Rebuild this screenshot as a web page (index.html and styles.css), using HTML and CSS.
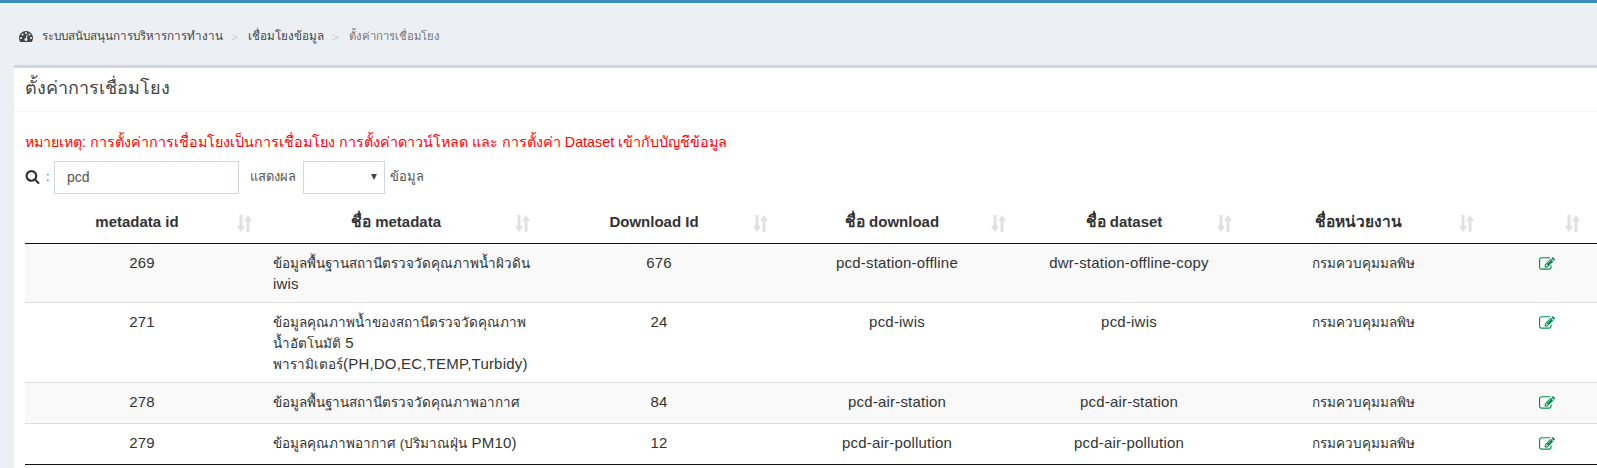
FILE: index.html
```html
<!DOCTYPE html>
<html>
<head>
  <title>ตั้งค่าการเชื่อมโยง</title>
  <link rel="stylesheet" href="styles.css">
</head>
<body>
  <svg class="defs" width="0" height="0">
    <symbol id="i-sort" viewBox="0 0 15 17">
      <path d="M2.500 0h3v11h2.500l-4 6-4-6h2.500z"/>
      <path d="M9.500 17h3V6H15l-4-6-4 6h2.500z"/>
    </symbol>
    <symbol id="i-edit" viewBox="0 0 1792 1792">
      <path d="M888 1184l116-116-152-152-116 116v56h96v96h56zm440-720q-16-16-33 1l-350 350q-17 17-1 33t33-1l350-350q17-17 1-33zm80 594v190q0 119-84.500 203.500t-203.500 84.500h-832q-119 0-203.500-84.500t-84.500-203.500v-832q0-119 84.500-203.500t203.500-84.500h832q63 0 117 25 15 7 18 23 3 17-9 29l-49 49q-14 14-32 8-23-6-45-6h-832q-66 0-113 47t-47 113v832q0 66 47 113t113 47h832q66 0 113-47t47-113v-126q0-13 9-22l64-64q15-15 35-7t20 29zm-96-738l288 288-672 672h-288v-288zm444 132l-92 92-288-288 92-92q28-28 68-28t68 28l152 152q28 28 28 68t-28 68z"/>
    </symbol>
  </svg>

  <div class="topbar"></div>

  <div class="breadcrumb">
    <svg class="crumb-icon" viewBox="0 0 1792 1792"><path d="M384 1152q0-53-37.500-90.500t-90.500-37.500-90.500 37.500-37.500 90.500 37.500 90.500 90.500 37.500 90.500-37.500 37.500-90.500zm192-448q0-53-37.500-90.500t-90.500-37.500-90.500 37.500-37.500 90.500 37.500 90.500 90.500 37.500 90.500-37.500 37.500-90.500zm428 481l101-382q6-26-7.500-48.500t-38.500-29.500-48 6.500-30 39.500l-101 382q-60 5-107 43.500t-63 98.500q-20 77 20 146t117 89 146-20 89-117q16-60-6-117t-72-91zm660-33q0-53-37.500-90.500t-90.500-37.500-90.500 37.500-37.500 90.500 37.500 90.500 90.500 37.500 90.500-37.500 37.500-90.500zm-640-640q0-53-37.500-90.500t-90.500-37.500-90.500 37.500-37.500 90.500 37.500 90.500 90.500 37.500 90.500-37.500 37.500-90.500zm448 192q0-53-37.500-90.500t-90.500-37.500-90.500 37.500-37.500 90.500 37.500 90.500 90.500 37.500 90.500-37.500 37.500-90.500zm320 448q0 261-141 483-19 29-54 29h-1402q-35 0-54-29-141-221-141-483 0-182 71-348t191-286 286-191 348-71 348 71 286 191 191 286 71 348z"/></svg>
    <span class="crumb">ระบบสนับสนุนการบริหารการทำงาน</span>
    <span class="crumb-sep">&gt;</span>
    <span class="crumb">เชื่อมโยงข้อมูล</span>
    <span class="crumb-sep">&gt;</span>
    <span class="crumb crumb-active">ตั้งค่าการเชื่อมโยง</span>
  </div>

  <div class="box">
    <div class="box-header">ตั้งค่าการเชื่อมโยง</div>
    <div class="box-body">
      <p class="note">หมายเหตุ: การตั้งค่าการเชื่อมโยงเป็นการเชื่อมโยง การตั้งค่าดาวน์โหลด และ การตั้งค่า Dataset เข้ากับบัญชีข้อมูล</p>

      <div class="filter">
        <svg class="search-icon" viewBox="0 0 1792 1792"><path d="M1216 832q0-185-131.500-316.500t-316.500-131.500-316.500 131.500-131.500 316.500 131.500 316.500 316.500 131.500 316.500-131.500 131.500-316.500zm512 832q0 52-38 90t-90 38q-54 0-90-38l-343-342q-179 124-399 124-143 0-273.500-55.500t-225-150-150-225-55.500-273.500 55.500-273.500 150-225 225-150 273.500-55.500 273.500 55.500 225 150 150 225 55.500 273.500q0 220-124 399l343 343q37 37 37 90z"/></svg>
        <span class="colon">:</span>
        <input class="search-input" type="text" value="pcd">
        <span class="show-label">แสดงผล</span>
        <div class="length-select"><span class="caret"></span></div>
        <span class="rows-label">ข้อมูล</span>
      </div>

      <table class="data">
        <colgroup>
          <col class="c1"><col class="c2"><col class="c3"><col class="c4"><col class="c5"><col class="c6"><col class="c7">
        </colgroup>
        <thead>
          <tr>
            <th>metadata id<svg class="sort"><use href="#i-sort"/></svg></th>
            <th><span class="th">ชื่อ</span> metadata<svg class="sort"><use href="#i-sort"/></svg></th>
            <th>Download Id<svg class="sort"><use href="#i-sort"/></svg></th>
            <th><span class="th">ชื่อ</span> download<svg class="sort"><use href="#i-sort"/></svg></th>
            <th><span class="th">ชื่อ</span> dataset<svg class="sort"><use href="#i-sort"/></svg></th>
            <th><span class="th">ชื่อหน่วยงาน</span><svg class="sort"><use href="#i-sort"/></svg></th>
            <th><svg class="sort sort-last"><use href="#i-sort"/></svg></th>
          </tr>
        </thead>
        <tbody>
          <tr>
            <td>269</td>
            <td class="name"><span class="th">ข้อมูลพื้นฐานสถานีตรวจวัดคุณภาพน้ำผิวดิน</span><br>iwis</td>
            <td>676</td>
            <td>pcd-station-offline</td>
            <td>dwr-station-offline-copy</td>
            <td><span class="th">กรมควบคุมมลพิษ</span></td>
            <td class="action"><svg class="edit"><use href="#i-edit"/></svg></td>
          </tr>
          <tr>
            <td>271</td>
            <td class="name"><span class="th">ข้อมูลคุณภาพน้ำของสถานีตรวจวัดคุณภาพ<br>น้ำอัตโนมัติ</span> 5<br><span class="th">พารามิเตอร์</span>(PH,DO,EC,TEMP,Turbidy)</td>
            <td>24</td>
            <td>pcd-iwis</td>
            <td>pcd-iwis</td>
            <td><span class="th">กรมควบคุมมลพิษ</span></td>
            <td class="action"><svg class="edit"><use href="#i-edit"/></svg></td>
          </tr>
          <tr>
            <td>278</td>
            <td class="name"><span class="th">ข้อมูลพื้นฐานสถานีตรวจวัดคุณภาพอากาศ</span></td>
            <td>84</td>
            <td>pcd-air-station</td>
            <td>pcd-air-station</td>
            <td><span class="th">กรมควบคุมมลพิษ</span></td>
            <td class="action"><svg class="edit"><use href="#i-edit"/></svg></td>
          </tr>
          <tr>
            <td>279</td>
            <td class="name"><span class="th">ข้อมูลคุณภาพอากาศ (ปริมาณฝุ่น</span> PM10)</td>
            <td>12</td>
            <td>pcd-air-pollution</td>
            <td>pcd-air-pollution</td>
            <td><span class="th">กรมควบคุมมลพิษ</span></td>
            <td class="action"><svg class="edit"><use href="#i-edit"/></svg></td>
          </tr>
        </tbody>
      </table>
    </div>
  </div>
</body>
</html>
```

FILE: styles.css
```css
html, body {
  height: 100%;
  overflow: hidden;
}

body {
  margin: 0;
  background-color: #ecf0f5;
  color: #333;
  font-family: "Liberation Sans", "Noto Sans", sans-serif;
  font-size: 14px;
}

.defs {
  position: absolute;
}

.topbar {
  height: 3px;
  background-color: #3c8dbc;
}

.breadcrumb {
  display: flex;
  align-items: center;
  height: 58px;
  padding: 4px 0 0 19px;
  font-size: 11.7px;
  color: #444;
}

.crumb-icon {
  width: 14px;
  height: 14px;
  margin-right: 9px;
  fill: #444;
}

.crumb-sep {
  margin: 0 10px 0 8px;
  color: #ccc;
}

.crumb-active {
  font-size: 11.3px;
  color: #777;
}

.box {
  margin-left: 14px;
  width: 1601px;
  border-top: 3px solid #d2d6de;
  background-color: #fff;
  height: 400px;
}

.box-header {
  height: 43px;
  line-height: 40px;
  padding-left: 11px;
  font-size: 18px;
  color: #444;
  border-bottom: 1px solid #f4f4f4;
}

.box-body {
  padding: 0 0 0 11px;
}

.note {
  margin: 0;
  padding-top: 19px;
  height: 30px;
  line-height: 22px;
  font-size: 14.3px;
  color: #f00;
}

.filter {
  display: flex;
  align-items: center;
  height: 33px;
  margin-bottom: 8px;
  font-size: 13px;
}

.search-icon {
  width: 15px;
  height: 15px;
  margin-bottom: 2px;
  fill: #333;
}

.colon {
  width: 14px;
  padding: 0 0 2px 6px;
  box-sizing: border-box;
  color: #555;
}

.search-input {
  width: 185px;
  height: 33px;
  box-sizing: border-box;
  padding: 0 12px 2px;
  border: 1px solid #d2d6de;
  font-family: inherit;
  font-size: 14px;
  color: #555;
}

.show-label {
  margin-left: 11px;
  width: 53px;
  padding-bottom: 2px;
  color: #555;
}

.length-select {
  position: relative;
  width: 82px;
  height: 33px;
  box-sizing: border-box;
  border: 1px solid #d2d6de;
  background-color: #fff;
}

.caret {
  position: absolute;
  top: 12px;
  right: 7px;
  border-left: 3.5px solid transparent;
  border-right: 3.5px solid transparent;
  border-top: 6px solid #444;
}

.rows-label {
  margin-left: 5px;
  padding-bottom: 2px;
  color: #555;
}

.data {
  width: 1582px;
  table-layout: fixed;
  border-collapse: separate;
  border-spacing: 0;
  border-bottom: 1px solid #111;
  font-size: 15px;
}

.th {
  font-size: 13.5px;
  line-height: 1;
  letter-spacing: 0;
}

.c1 { width: 240px; }
.c2 { width: 278px; }
.c3 { width: 238px; }
.c4 { width: 238px; }
.c5 { width: 226px; }
.c6 { width: 242px; }
.c7 { width: 120px; }

.data th {
  position: relative;
  height: 21px;
  padding: 9px 24px 11px 8px;
  border-bottom: 1px solid #111;
  color: #333;
  font-weight: bold;
  text-align: center;
}

.data th .th {
  font-size: 15.5px;
}

.data td {
  padding: 8px 14px 8px 8px;
  line-height: 21px;
  letter-spacing: .2px;
  text-align: center;
  vertical-align: top;
  border-top: 1px solid #ddd;
}

.data tbody tr:first-child td {
  border-top: none;
}

.data tbody tr:nth-child(odd) {
  background-color: #f9f9f9;
}

.data .name {
  text-align: left;
  white-space: nowrap;
}

.data .action {
  padding-right: 8px;
}

.sort {
  position: absolute;
  top: 13px;
  right: 13px;
  width: 15px;
  height: 17px;
  fill: #e0e0e0;
}

.sort-last {
  right: 27px;
}

.edit {
  display: block;
  width: 16px;
  height: 22px;
  padding: 1px 0;
  margin: 0 auto;
  fill: #008d4c;
}
```
